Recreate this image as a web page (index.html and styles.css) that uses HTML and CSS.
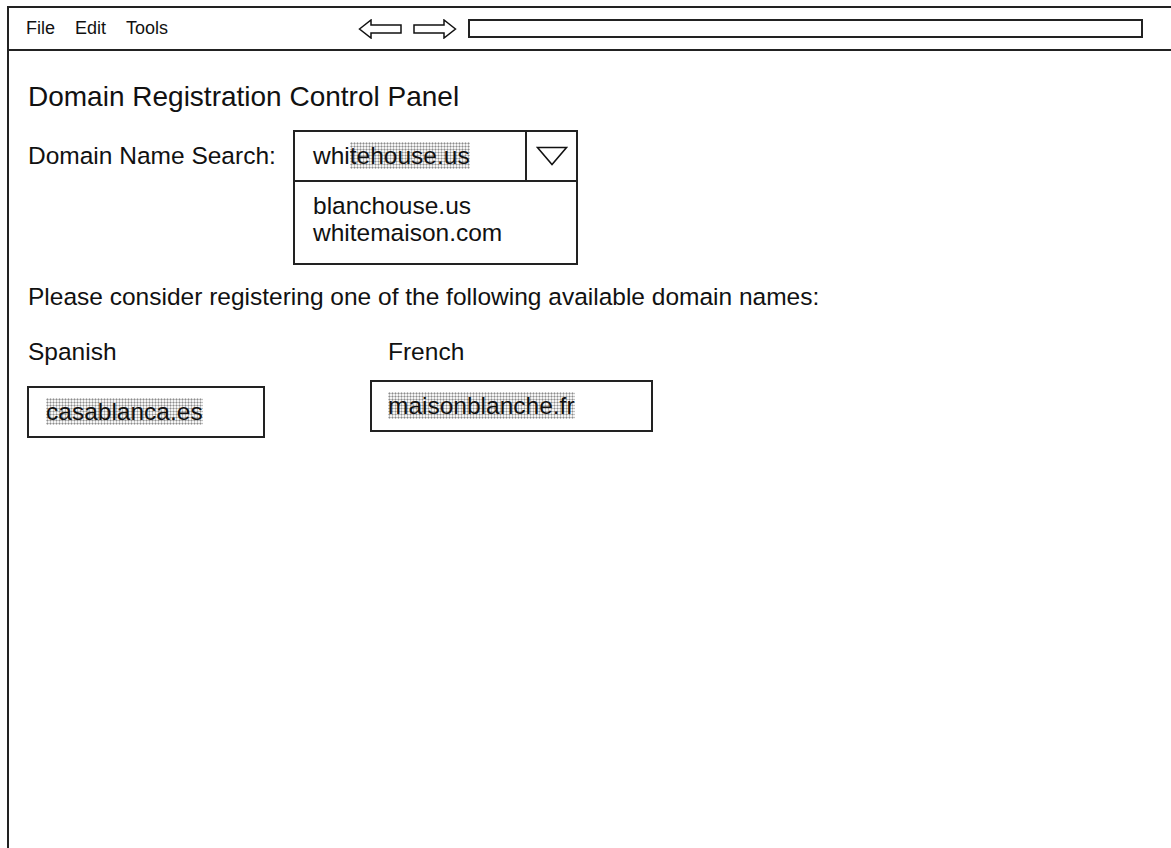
FILE: index.html
```html
<!DOCTYPE html>
<html lang="en">
<head>
<meta charset="utf-8">
<title>Domain Registration Control Panel</title>
<link rel="stylesheet" href="styles.css">
</head>
<body>
<div class="window">
  <div class="menubar">
    <nav class="menu">
      <span>File</span>
      <span>Edit</span>
      <span>Tools</span>
    </nav>
    <div class="nav-buttons">
      <svg class="arrow" width="44" height="20" viewBox="0 0 44 20">
        <path d="M1.5 10 L13 1 L13 6 L43 6 L43 14 L13 14 L13 19 Z" fill="none" stroke="#111" stroke-width="1.5" stroke-linejoin="miter"/>
      </svg>
      <svg class="arrow" width="44" height="20" viewBox="0 0 44 20">
        <path d="M42.5 10 L31 1 L31 6 L1 6 L1 14 L31 14 L31 19 Z" fill="none" stroke="#111" stroke-width="1.5" stroke-linejoin="miter"/>
      </svg>
    </div>
    <div class="address"></div>
  </div>

  <main class="content">
    <h1 class="title">Domain Registration Control Panel</h1>

    <div class="search-row">
      <label class="search-label">Domain Name Search:</label>
      <div class="combo">
        <div class="combo-head">
          <div class="combo-value">whi<span class="hl">tehouse.us</span></div>
          <div class="combo-toggle">
            <svg width="32" height="20" viewBox="0 0 32 20">
              <path d="M1.5 1.5 L30.5 1.5 L16 18.5 Z" fill="none" stroke="#111" stroke-width="1.5"/>
            </svg>
          </div>
        </div>
        <ul class="combo-list">
          <li>blanchouse.us</li>
          <li>whitemaison.com</li>
        </ul>
      </div>
    </div>

    <p class="prompt">Please consider registering one of the following available domain names:</p>

    <div class="suggestions">
      <section class="lang lang-es">
        <h2 class="lang-name">Spanish</h2>
        <div class="domain-box"><span class="hl">casablanca.es</span></div>
      </section>
      <section class="lang lang-fr">
        <h2 class="lang-name">French</h2>
        <div class="domain-box"><span class="hl">maisonblanche.fr</span></div>
      </section>
    </div>
  </main>
</div>
</body>
</html>
```

FILE: styles.css
```css
* {
  box-sizing: border-box;
}

html, body {
  margin: 0;
  padding: 0;
  background: #fff;
  overflow: hidden;
}

body {
  font-family: "Liberation Sans", Arial, Helvetica, sans-serif;
  color: #111;
}

/* window frame: left and top edges only, runs off the right and bottom */
.window {
  margin: 6px 0 0 7px;
  height: 842px;
  border-left: 2px solid #222;
  border-top: 2px solid #222;
}

.menubar {
  height: 43px;
  border-bottom: 2px solid #222;
  display: flex;
  align-items: center;
}

.menu {
  display: flex;
  gap: 20px;
  padding-left: 17px;
  font-size: 18px;
  width: 349px;
}

.nav-buttons {
  display: flex;
  gap: 11px;
  align-items: center;
}

.arrow {
  display: block;
}

.address {
  margin-left: 11px;
  width: 675px;
  height: 19px;
  border: 2px solid #222;
}

.content {
  padding: 0 0 0 19px;
}

.title {
  margin: 30px 0 0 0;
  font-size: 28px;
  font-weight: normal;
  line-height: 32px;
}

.search-row {
  display: flex;
  align-items: flex-start;
  margin-top: 17px;
}

.search-label {
  font-size: 24.5px;
  line-height: 28px;
  width: 265px;
  padding-top: 12px;
}

.combo {
  width: 285px;
  border: 2px solid #222;
}

.combo-head {
  display: flex;
  height: 50px;
  border-bottom: 2px solid #222;
}

.combo-value {
  flex: 1;
  font-size: 24.5px;
  line-height: 28px;
  padding: 10px 0 0 18px;
  border-right: 2px solid #222;
}

.combo-toggle {
  width: 49px;
  display: flex;
  align-items: center;
  justify-content: center;
}

.combo-list {
  list-style: none;
  margin: 0;
  padding: 10px 0 0 18px;
  height: 81px;
  font-size: 24.5px;
  line-height: 27px;
}

/* stippled selection highlight */
.hl {
  background-color: #f4f4f4;
  background-image: radial-gradient(circle, #8c8c8c 0.9px, transparent 1.1px);
  background-size: 3px 3px;
}

.prompt {
  margin: 17px 0 0 0;
  font-size: 24.5px;
  line-height: 30px;
}

.suggestions {
  display: flex;
  margin-top: 25px;
}

.lang-name {
  margin: 0;
  font-size: 24.5px;
  line-height: 30px;
  font-weight: normal;
}

.lang-es {
  width: 360px;
}

.lang-es .lang-name {
  margin-bottom: 19px;
}

.lang-fr .lang-name {
  margin-bottom: 13px;
}

.domain-box {
  border: 2px solid #222;
  font-size: 24.5px;
  line-height: 30px;
  height: 52px;
  padding: 9px 0 0 17px;
}

.lang-es .domain-box {
  width: 238px;
  margin-left: -1px;
}

.lang-fr .domain-box {
  width: 283px;
  margin-left: -18px;
  padding-left: 16px;
}
```
